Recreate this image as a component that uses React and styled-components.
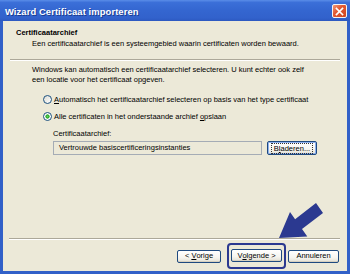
import React from "react";
import styled, { createGlobalStyle } from "styled-components";

const GlobalStyle = createGlobalStyle`
	html, body {
		margin: 0;
		padding: 0;
		background: #ece9d8;
	}
	body {
		font-family: "Liberation Sans", Arial, sans-serif;
		font-size: 7.5px;
		color: #000;
	}
`;

const App = () => {
	return (
		<>
			<GlobalStyle />
			<Window>
				<TitleBar>
					<TitleText>Wizard Certificaat importeren</TitleText>
					<CloseButton aria-label="Sluiten">
						<svg width="9" height="9" viewBox="0 0 9 9">
							<path d="M1.5 1.5 L7.5 7.5 M7.5 1.5 L1.5 7.5" stroke="#fff" strokeWidth="1.7" strokeLinecap="square" />
						</svg>
					</CloseButton>
				</TitleBar>

				<Body>
					{/* Header */}
					<Header>
						<HeaderTitle>Certificaatarchief</HeaderTitle>
						<HeaderDesc>
							Een certificaatarchief is een systeemgebied waarin certificaten worden bewaard.
						</HeaderDesc>
					</Header>
					<Separator />

					{/* Content */}
					<Content>
						<Paragraph>
							Windows kan automatisch een certificaatarchief selecteren. U kunt echter ook zelf
							<br />
							een locatie voor het certificaat opgeven.
						</Paragraph>

						<RadioRow $first>
							<Radio />
							<span>
								<u>A</u>utomatisch het certificaatarchief selecteren op basis van het type certificaat
							</span>
						</RadioRow>
						<RadioRow>
							<Radio $checked />
							<span>
								Alle certificaten in het onderstaande archief <u>o</u>pslaan
							</span>
						</RadioRow>

						<StoreGroup>
							<StoreLabel>Certificaatarchief:</StoreLabel>
							<StoreRow>
								<StoreField>Vertrouwde basiscertificeringsinstanties</StoreField>
								<Button $width={50} $focused>
									<FocusText>
										B<u>l</u>aderen...
									</FocusText>
								</Button>
							</StoreRow>
						</StoreGroup>
					</Content>

					<Separator $bottom />
					<Footer>
						<Button $width={44}>
							{"< "}
							<u>V</u>orige
						</Button>
						<Highlight>
							<Button $width={51}>
								V<u>o</u>lgende {">"}
							</Button>
						</Highlight>
						<Button $width={51}>Annuleren</Button>
					</Footer>
				</Body>

				{/* arrow pointing at Volgende */}
				<Arrow viewBox="0 0 350 274" width="350" height="274">
					<polygon
						points="279,238 290,212 295.1,219.3 316,203 323,213 302,229.1 307.3,236.4"
						fill="#2b3990"
					/>
				</Arrow>
			</Window>
		</>
	);
};

const Window = styled.div`
	position: relative;
	width: 350px;
	height: 274px;
	display: flex;
	flex-direction: column;
	box-sizing: border-box;
	background: #3160c8;
	overflow: hidden;
`;

const TitleBar = styled.div`
	height: 21px;
	flex-shrink: 0;
	display: flex;
	align-items: center;
	justify-content: space-between;
	padding: 0 3px 0 5px;
	background: linear-gradient(180deg, #5a8de8 0%, #3b6fd8 12%, #3466d0 50%, #3262cc 85%, #2c58c0 100%);
`;

const TitleText = styled.div`
	color: #fff;
	font-weight: bold;
	font-size: 9.4px;
	letter-spacing: 0.1px;
	padding-top: 1px;
	text-shadow: 1px 1px 0 #1a3c90;
`;

const CloseButton = styled.div`
	width: 13px;
	height: 12px;
	border: 1px solid #f4f4f4;
	border-radius: 2px;
	background: linear-gradient(135deg, #f09878 0%, #e25a34 40%, #d0461f 100%);
	display: flex;
	align-items: center;
	justify-content: center;
	margin-top: 1px;
`;

const Body = styled.div`
	flex: 1;
	display: flex;
	flex-direction: column;
	background: #ece9d8;
	margin: 0 3px 3px 3px;
`;

const Header = styled.div`
	padding: 6px 0 0 13px;
	height: 38px;
	box-sizing: border-box;
`;

const HeaderTitle = styled.div`
	font-weight: bold;
	line-height: 11px;
`;

const HeaderDesc = styled.div`
	line-height: 12px;
	margin-left: 16px;
`;

const Separator = styled.div`
	height: 0;
	border-top: 1px solid #aca899;
	border-bottom: 1px solid #fff;
	margin: ${(p) => (p.$bottom ? "0 7px 0 6px" : "0 7px 0 7px")};
`;

const Content = styled.div`
	flex: 1;
	padding: 4px 0 0 29px;
`;

const Paragraph = styled.div`
	line-height: 9.5px;
`;

const RadioRow = styled.div`
	display: flex;
	align-items: center;
	gap: 2px;
	height: 11px;
	margin: ${(p) => (p.$first ? "10px" : "6px")} 0 0 11px;
`;

const Radio = styled.span`
	width: 9px;
	height: 9px;
	box-sizing: border-box;
	border-radius: 50%;
	border: 1px solid #1c5180;
	background: ${(p) =>
		p.$checked
			? "radial-gradient(circle, #5fd35f 0, #21a121 1.8px, #fff 2.4px)"
			: "linear-gradient(135deg, #dcdcd4, #fff)"};
	flex-shrink: 0;
`;

const StoreGroup = styled.div`
	margin: 6px 0 0 21px;
`;

const StoreLabel = styled.div`
	line-height: 11px;
`;

const StoreRow = styled.div`
	display: flex;
	align-items: center;
	gap: 5px;
	margin-top: 2px;
`;

const StoreField = styled.div`
	width: 209px;
	height: 14px;
	box-sizing: border-box;
	border: 1px solid #a5acb5;
	padding-left: 5px;
	line-height: 11px;
	background: #ece9d8;
`;

const Button = styled.div`
	width: ${(p) => p.$width}px;
	height: ${(p) => (p.$focused ? 14 : 13)}px;
	box-sizing: border-box;
	border: 1px solid #1f4a80;
	border-radius: 2px;
	background: linear-gradient(180deg, #ffffff 0%, #f6f5f0 60%, #e3e0d3 100%);
	box-shadow: ${(p) => (p.$focused ? "inset 0 0 0 1px #8eb1ee" : "inset 0 -1px 0 #d6d0c0")};
	display: flex;
	align-items: center;
	justify-content: center;
	line-height: 10px;
	white-space: pre;
	flex-shrink: 0;
`;

const FocusText = styled.span`
	outline: 1px dotted #333;
	outline-offset: 0;
	padding: 0 2px;
	line-height: 9px;
`;

const Footer = styled.div`
	height: 30px;
	display: flex;
	align-items: center;
	justify-content: flex-end;
	gap: 6px;
	padding: 1px 8px 0 0;
`;

const Highlight = styled.div`
	border: 2px solid #2b3990;
	border-radius: 4px;
	padding: 4px 2px 5px 2px;
	margin-right: -4px;
	display: flex;
`;

const Arrow = styled.svg`
	position: absolute;
	top: 0;
	left: 0;
	pointer-events: none;
`;

export default App;
